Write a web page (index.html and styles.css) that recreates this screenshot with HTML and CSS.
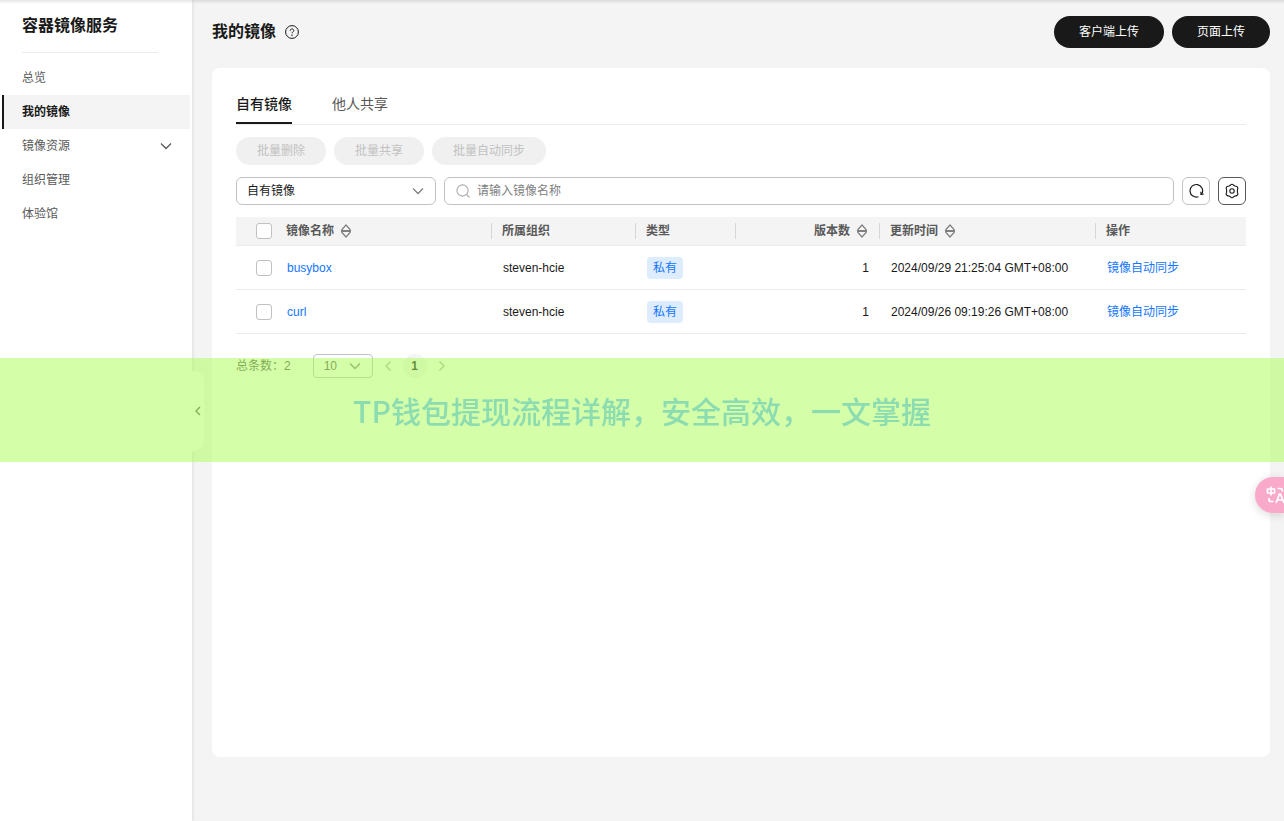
FILE: index.html
```html
<!DOCTYPE html>
<html lang="zh-CN">
<head>
<meta charset="utf-8">
<meta name="viewport" content="width=device-width, initial-scale=1">
<title>容器镜像服务</title>
<link rel="stylesheet" href="styles.css">
</head>
<body>
<svg class="defs" aria-hidden="true">
  <symbol id="down" viewBox="0 0 12 12"><path d="M1 3.5l5 5 5-5" fill="none" stroke="currentColor" stroke-width="1.3"/></symbol>
  <symbol id="sort" viewBox="0 0 12 14"><path d="M1.500 6L6 1l4.500 5M1.500 8L6 13l4.500-5" fill="none" stroke="currentColor" stroke-width="1.200"/><path d="M1 6h10v2H1z" fill="currentColor"/></symbol>
</svg>
<div class="layout">
  <nav class="sidebar">
    <h2 class="service">容器镜像服务</h2>
    <ul class="menu">
      <li><a class="item" href="#">总览</a></li>
      <li><a class="item active" href="#" aria-current="page">我的镜像</a></li>
      <li><a class="item" href="#">镜像资源<svg class="icon12"><use href="#down"/></svg></a></li>
      <li><a class="item" href="#">组织管理</a></li>
      <li><a class="item" href="#">体验馆</a></li>
    </ul>
    <button class="collapse" type="button" aria-label="收起"><svg class="arrow" viewBox="0 0 8 12"><path d="M6 2L2 6l4 4" fill="none" stroke="currentColor" stroke-width="1.3"/></svg></button>
  </nav>
  <main class="main">
    <header class="head">
      <h1 class="title">我的镜像</h1>
      <svg class="help" viewBox="0 0 14 14"><g fill="none" stroke="#191919" stroke-width="1"><circle cx="7" cy="7" r="6.400"/><path d="M5.200 5.700c0-2.400 3.600-2.400 3.600-.1C8.800 6.900 7 6.800 7 8.400"/></g><circle cx="7" cy="10.200" r=".75" fill="#191919"/></svg>
      <div class="actions">
        <button class="primary" type="button">客户端上传</button>
        <button class="primary" type="button">页面上传</button>
      </div>
    </header>
    <section class="card">
      <div class="tabs" role="tablist">
        <button class="tab selected" role="tab" aria-selected="true" type="button">自有镜像</button>
        <button class="tab" role="tab" aria-selected="false" type="button">他人共享</button>
      </div>
      <div class="batch">
        <button class="ghost" type="button" disabled>批量删除</button>
        <button class="ghost" type="button" disabled>批量共享</button>
        <button class="ghost" type="button" disabled>批量自动同步</button>
      </div>
      <div class="filters">
        <div class="select">
          <select class="scope" aria-label="镜像范围"><option>自有镜像</option></select>
          <svg class="icon12 caret"><use href="#down"/></svg>
        </div>
        <label class="search">
          <svg class="lens" viewBox="0 0 14 14"><g fill="none" stroke="#adadad" stroke-width="1.1"><circle cx="6.500" cy="6.500" r="5.600"/><path d="M10.500 10.500l3 3"/></g></svg>
          <input class="query" type="text" placeholder="请输入镜像名称" aria-label="镜像名称">
        </label>
        <button class="tool" type="button" aria-label="刷新"><svg class="icon16" viewBox="0 0 16 16"><path d="M10.500 13.700A6.300 6.300 0 1 1 14 10.500" fill="none" stroke="#191919" stroke-width="1.200"/><path d="M12.200 11.400l3.400-.2M12.600 8.800l1.200 2.700" fill="none" stroke="#191919" stroke-width="1.200"/></svg></button>
        <button class="tool strong" type="button" aria-label="设置"><svg class="icon16" viewBox="0 0 16 16"><g fill="none" stroke="#191919" stroke-width="1.100" stroke-linejoin="round"><path d="M6.300 2.300Q8 .2 9.700 2.300l1.300.7q2.700.1 2.900 2.400l-.5 1.200v2.800l.5 1.200q-.2 2.300-2.900 2.400l-1.300.7Q8 15.800 6.300 13.700L5 13q-2.700-.1-2.900-2.400l.5-1.200V6.600l-.5-1.200Q2.300 3.100 5 3z"/><circle cx="8" cy="8" r="2.200"/></g></svg></button>
      </div>
      <table class="grid">
        <colgroup><col class="c-check"><col class="c-name"><col class="c-org"><col class="c-type"><col class="c-ver"><col class="c-time"><col class="c-op"></colgroup>
        <thead>
          <tr>
            <th class="pick"><input class="box" type="checkbox" aria-label="全选"></th>
            <th class="first"><span class="label">镜像名称<svg class="sort"><use href="#sort"/></svg></span></th>
            <th><span class="label">所属组织</span></th>
            <th><span class="label">类型</span></th>
            <th class="num"><span class="label">版本数<svg class="sort"><use href="#sort"/></svg></span></th>
            <th><span class="label">更新时间<svg class="sort"><use href="#sort"/></svg></span></th>
            <th><span class="label">操作</span></th>
          </tr>
        </thead>
        <tbody>
          <tr>
            <td class="pick"><input class="box" type="checkbox" aria-label="选择 busybox"></td>
            <td class="first"><a class="link" href="#">busybox</a></td>
            <td>steven-hcie</td>
            <td><span class="tag">私有</span></td>
            <td class="num">1</td>
            <td>2024/09/29 21:25:04 GMT+08:00</td>
            <td><a class="link" href="#">镜像自动同步</a></td>
          </tr>
          <tr>
            <td class="pick"><input class="box" type="checkbox" aria-label="选择 curl"></td>
            <td class="first"><a class="link" href="#">curl</a></td>
            <td>steven-hcie</td>
            <td><span class="tag">私有</span></td>
            <td class="num">1</td>
            <td>2024/09/26 09:19:26 GMT+08:00</td>
            <td><a class="link" href="#">镜像自动同步</a></td>
          </tr>
        </tbody>
      </table>
      <div class="pager">
        <span class="total">总条数：2</span>
        <div class="select">
          <select class="size" aria-label="每页条数"><option>10</option></select>
          <svg class="icon12 caret"><use href="#down"/></svg>
        </div>
        <div class="pages">
          <button class="step" type="button" aria-label="上一页"><svg class="arrow" viewBox="0 0 8 12"><path d="M6.500 1.500L2 6l4.500 4.500" fill="none" stroke="currentColor" stroke-width="1.200"/></svg></button>
          <button class="page" type="button">1</button>
          <button class="step" type="button" aria-label="下一页"><svg class="arrow" viewBox="0 0 8 12"><path d="M1.500 1.500L6 6l-4.500 4.500" fill="none" stroke="currentColor" stroke-width="1.200"/></svg></button>
        </div>
      </div>
    </section>
  </main>
</div>
<div class="topline"></div>
<div class="banner">TP钱包提现流程详解，安全高效，一文掌握</div>
<button class="translate" type="button" aria-label="翻译"><svg class="glyph" viewBox="0 0 20 20"><g fill="none" stroke="#fff" stroke-width="1.700"><path d="M1.500 4h7v4h-7zM5 1.500v9M11.500 3.500h3q2 0 2 3M3 13v1.500q0 2 2 2h2.500"/><path d="M10 18l3.500-9h1l3.500 9M11.300 15h5.400"/></g></svg></button>
</body>
</html>
```
FILE: styles.css
```css
* { box-sizing: border-box; }
body {
  margin: 0;
  background: #f4f4f4;
  color: #191919;
  font: 12px/18px "Liberation Sans", "Noto Sans CJK SC", sans-serif;
  overflow-x: hidden;
}
button, input, select { font: inherit; color: inherit; margin: 0; }
button { border: 0; padding: 0; cursor: pointer; }
a { color: inherit; text-decoration: none; }
.defs { position: absolute; width: 0; height: 0; }
.icon12 { width: 12px; height: 12px; }
.icon16 { width: 16px; height: 16px; }
.arrow { display: block; width: 8px; height: 12px; }

.layout { display: flex; min-height: 100vh; }
.topline {
  position: fixed; top: 0; left: 0; right: 0; height: 4px;
  background: linear-gradient(rgba(0,0,0,.1), rgba(0,0,0,0));
}

.sidebar {
  position: relative;
  flex: 0 0 192px;
  padding: 14px 2px 0;
  background: #fff;
  box-shadow: 0 0 4px rgba(0,0,0,.14);
}
.service {
  margin: 0 32px 8px 20px;
  padding-bottom: 14px;
  border-bottom: 1px solid #ebebeb;
  font-size: 16px; line-height: 24px; font-weight: 700;
}
.menu { margin: 0; padding: 0; list-style: none; }
.item {
  display: flex; align-items: center; justify-content: space-between;
  height: 34px; padding: 0 18px;
  border-left: 2px solid transparent;
  color: #595959;
}
.item.active { border-color: #191919; background: #f4f4f4; color: #191919; font-weight: 700; }
.collapse {
  position: absolute; left: 100%; top: 50%;
  width: 12px; height: 80px; margin-top: -40px;
  display: flex; align-items: center; justify-content: center;
  border-radius: 0 10px 10px 0;
  background: #fff; color: #595959;
}

.main { flex: 1; min-width: 0; display: flex; flex-direction: column; padding: 16px 14px 64px 20px; }
.head { display: flex; align-items: center; gap: 9px; height: 32px; margin-bottom: 20px; }
.title { margin: 0; font-size: 16px; line-height: 24px; font-weight: 700; }
.help { width: 14px; height: 14px; }
.actions { display: flex; gap: 8px; margin-left: auto; }
.primary { height: 32px; padding: 0 25px; border-radius: 16px; background: #191919; color: #fff; }

.card { flex: 1; padding: 20px 24px; border-radius: 8px; background: #fff; }
.tabs { display: flex; gap: 40px; border-bottom: 1px solid #ebebeb; margin-bottom: 12px; }
.tab {
  height: 36px; padding-bottom: 2px;
  border-bottom: 2px solid transparent;
  background: none; color: #595959; font-size: 14px;
}
.tab.selected { border-color: #191919; color: #191919; font-weight: 500; }
.batch { display: flex; gap: 8px; margin-bottom: 12px; }
.ghost { height: 28px; padding: 0 21px; border-radius: 14px; background: #f0f0f0; color: #c2c2c2; }

.filters { display: flex; gap: 8px; margin-bottom: 12px; }
.select { position: relative; display: flex; }
.scope, .size {
  appearance: none;
  padding: 0 10px;
  border: 1px solid #c2c2c2; border-radius: 6px;
  background: #fff;
}
.scope { width: 200px; height: 28px; }
.size { width: 60px; height: 24px; border-radius: 4px; }
.caret { position: absolute; right: 12px; top: 0; bottom: 0; margin: auto 0; color: #808080; pointer-events: none; }
.search {
  flex: 1; display: flex; align-items: center; gap: 7px;
  height: 28px; padding: 0 11px;
  border: 1px solid #c2c2c2; border-radius: 6px;
}
.lens { width: 14px; height: 14px; }
.query { flex: 1; min-width: 0; padding: 0; border: 0; outline: 0; background: none; }
.query::placeholder { color: #808080; }
.tool {
  display: flex; align-items: center; justify-content: center;
  width: 28px; height: 28px;
  border: 1px solid #c2c2c2; border-radius: 6px; background: #fff;
}
.tool.strong { border-color: #595959; }

.grid { width: 100%; table-layout: fixed; border-collapse: separate; border-spacing: 0; }
.c-check { width: 39px; }
.c-name { width: 216px; }
.c-org { width: 144px; }
.c-type { width: 100px; }
.c-ver { width: 144px; }
.c-time { width: 216px; }
.c-op { width: 151px; }
.grid th { height: 29px; padding: 0; background: #f4f4f4; border-bottom: 1px solid #ebebeb; color: #595959; text-align: left; }
.grid td { height: 44px; padding: 0 12px; border-bottom: 1px solid #ebebeb; white-space: nowrap; }
.grid .pick { padding: 0 0 0 20px; }
.label { display: flex; align-items: center; gap: 6px; height: 16px; padding: 0 10px; border-left: 1px solid #d6d6d6; }
.first .label { border-color: transparent; }
.num .label { justify-content: flex-end; padding-right: 11px; }
.grid td.num { text-align: right; padding-right: 10px; }
.sort { width: 12px; height: 14px; color: #808080; }
.box {
  appearance: none; display: block;
  width: 16px; height: 16px;
  border: 1px solid #c2c2c2; border-radius: 3px; background: #fff;
}
.box:checked { background: #191919; }
.link { color: #1476ff; }
.tag { display: inline-block; padding: 2px 6px; border-radius: 4px; background: #deecff; color: #1476ff; }

.pager { display: flex; align-items: center; margin-top: 20px; color: #595959; }
.total { margin-right: 22px; }
.pages { display: flex; align-items: center; gap: 11px; margin-left: 11px; }
.step { background: none; color: #adadad; }
.page { width: 24px; height: 24px; border-radius: 12px; background: #f4f4f4; color: #191919; font-weight: 700; }

.banner {
  position: fixed; left: 0; right: 0; top: 358px;
  padding: 32px 0;
  background: rgba(172,253,84,.5);
  color: #8cdcb1;
  font-family: "Noto Sans CJK SC", sans-serif;
  font-size: 30px; line-height: 40px; font-weight: 500; text-align: center;
  pointer-events: none;
}
.translate {
  position: fixed; right: 0; top: 477px;
  width: 29px; height: 36px; padding-left: 11px;
  border-radius: 18px 0 0 18px;
  background: #f9aacb;
  box-shadow: 0 2px 10px rgba(0,0,0,.15);
  overflow: hidden;
}
.glyph { display: block; width: 20px; height: 20px; }
```
